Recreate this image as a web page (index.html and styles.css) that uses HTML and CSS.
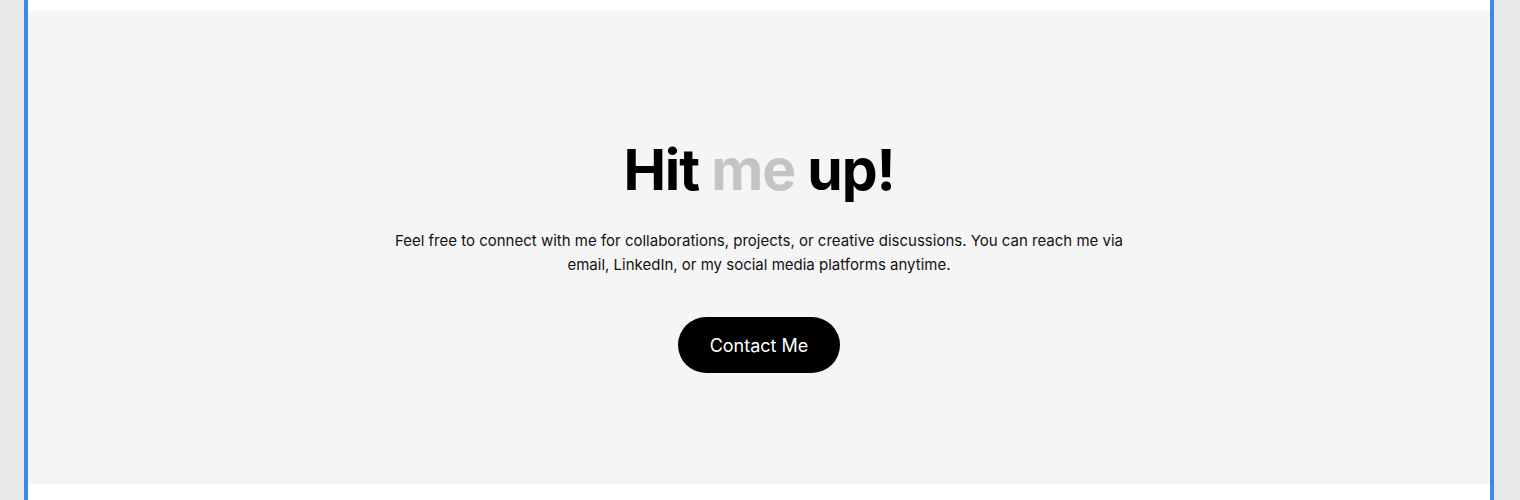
FILE: index.html
```html
<!DOCTYPE html>
<html lang="en">
<head>
<meta charset="utf-8">
<title>Hit me up</title>
<link rel="stylesheet" href="styles.css">
</head>
<body>
<div class="frame">
  <section class="contact">
    <h2 class="contact-title">Hit <span class="muted">me</span> up!</h2>
    <p class="contact-text">Feel free to connect with me for collaborations, projects, or creative discussions. You can reach me via email, LinkedIn, or my social media platforms anytime.</p>
    <a class="contact-btn" href="#">Contact Me</a>
  </section>
</div>
</body>
</html>
```
FILE: styles.css
```css
html, body {
  margin: 0;
  padding: 0;
}
body {
  background: #e8e8e8;
  font-family: Inter, "Noto Sans", sans-serif;
  height: 500px;
  overflow: hidden;
}
.frame {
  margin: 0 26px 0 24px;
  border-left: 4px solid #3b8be2;
  border-right: 4px solid #3b8be2;
  background: #ffffff;
  padding-top: 11px;
  height: 489px;
}
.contact {
  background: #f5f5f5;
  height: 473px;
  display: flex;
  flex-direction: column;
  align-items: center;
  justify-content: center;
  text-align: center;
  box-sizing: border-box;
  padding-top: 11px;
}
.contact-title {
  margin: 3px 0 0;
  font-size: 57px;
  font-weight: 700;
  line-height: 68px;
  letter-spacing: -0.02em;
  color: #000;
}
.muted {
  color: #c4c4c4;
}
.contact-text {
  margin: 25px 0 0;
  max-width: 740px;
  font-size: 15px;
  line-height: 24px;
  color: #111;
}
.contact-btn {
  margin-top: 40px;
  display: inline-flex;
  align-items: center;
  justify-content: center;
  height: 56px;
  padding: 0 32px;
  border-radius: 28px;
  background: #000;
  color: #fff;
  font-size: 18px;
  text-decoration: none;
}
```
